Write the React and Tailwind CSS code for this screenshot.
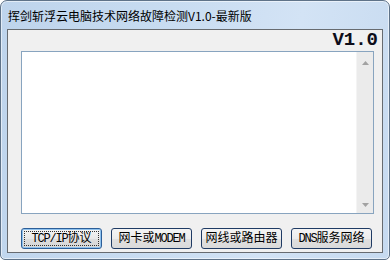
import React from "react";

const cjk = { fontFamily: '"Noto Sans CJK SC", "Microsoft YaHei", sans-serif' };
const mono = { fontFamily: '"Liberation Mono", "Noto Sans CJK SC", monospace' };

function Btn({ children, primary }) {
  return (
    <div
      className={
        "w-[81px] h-[21px] rounded-[3px] flex items-center justify-center text-[12px] leading-none text-black " +
        (primary
          ? "border border-[#2c5e98] shadow-[inset_0_0_0_1px_#8fc2ee] bg-[linear-gradient(#f4f4f4,#e9e9e9_50%,#dedede_51%,#d6d6d6)]"
          : "border border-[#1f3b64] bg-[linear-gradient(#f4f4f4,#ececec_50%,#e0e0e0_51%,#dadada)]")
      }
      style={mono}
    >
      {primary ? (
        <div className="w-[75px] h-[15px] border border-dotted border-[#333] flex items-center justify-center">
          {children}
        </div>
      ) : (
        children
      )}
    </div>
  );
}

const A = ({ t }) => <span className="tracking-[-1.2px]">{t}</span>;

export default function App() {
  return (
    <div className="w-[390px] h-[260px] bg-white">
      <div className="w-full h-full rounded-t-[7px] rounded-b-[5px] border border-[#5f7389] bg-[linear-gradient(100deg,#bed4ec_0%,#c8dcf1_40%,#d3e3f5_70%,#c6daf0_100%)] shadow-[inset_0_0_0_1px_rgba(255,255,255,0.55)] flex flex-col px-[6px] pb-[6px]">
        <div className="h-[28px] flex items-center pl-[1px] pt-[1px] text-[12px] text-black" style={cjk}>
          挥剑斩浮云电脑技术网络故障检测V1.0-最新版
        </div>
        <div className="flex-1 border border-[#676b70] bg-[#f0f0f0] flex flex-col">
          <div className="h-[21px] flex justify-end items-start pr-[4px]">
            <span className="text-[19px] font-bold leading-[20px] text-[#0d0d1a]" style={mono}>
              V1.0
            </span>
          </div>
          <div className="ml-[13px] mr-[8px] h-[163px] border border-[#88a4bf] bg-white flex justify-end">
            <div className="w-[17px] h-full bg-[#ebebeb] border-l border-[#f4f4f4] flex flex-col justify-between items-center pt-[9px] pb-[6px]">
              <svg width="7" height="4" viewBox="0 0 7 4">
                <polygon points="3.5,0 7,4 0,4" fill="#a2a2a2" />
              </svg>
              <svg width="7" height="4" viewBox="0 0 7 4">
                <polygon points="0,0 7,0 3.5,4" fill="#a2a2a2" />
              </svg>
            </div>
          </div>
          <div className="mt-[14px] ml-[13px] flex gap-[9px]">
            <Btn primary>
              <A t="TCP/IP" />协议
            </Btn>
            <Btn>
              网卡或<A t="MODEM" />
            </Btn>
            <Btn>网线或路由器</Btn>
            <Btn>
              <A t="DNS" />服务网络
            </Btn>
          </div>
        </div>
      </div>
    </div>
  );
}
